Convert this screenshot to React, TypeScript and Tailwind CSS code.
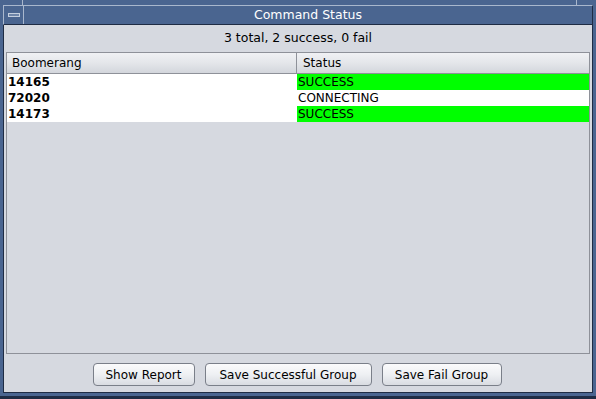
const rows = [
  { id: "14165", status: "SUCCESS", ok: true },
  { id: "72020", status: "CONNECTING", ok: false },
  { id: "14173", status: "SUCCESS", ok: true },
];

function Button(props: { label: string; className?: string }) {
  return (
    <button
      className={
        "h-[23px] rounded-[4px] border border-[#7a7f89] bg-gradient-to-b from-[#fbfbfc] via-[#eef0f3] to-[#d9dce2] text-[12px] leading-none text-black " +
        (props.className ?? "")
      }
    >
      {props.label}
    </button>
  );
}

export default function App() {
  return (
    <div
      className="flex h-[399px] w-[596px] flex-col bg-[#4a6590] text-black"
      style={{ fontFamily: '"DejaVu Sans", Verdana, sans-serif' }}
    >
      {/* top frame edge */}
      <div className="flex h-[5px]">
        <div className="w-[23px] border-r border-[#a9b7cd]" />
        <div className="flex-1" />
        <div className="w-[20px] border-l border-[#a9b7cd]" />
      </div>
      {/* title bar */}
      <div className="mx-[3px] flex h-[20px] border-t border-l border-r border-b border-t-[#a9b7cd] border-l-[#a9b7cd] border-r-[#1f2c44] border-b-[#1f2c44]">
        <div className="flex w-[20px] items-center justify-center border-r border-[#a9b7cd]">
          <div className="mb-[1px] h-[4px] w-[12px] border border-[#c3cede] bg-[#6d84a8]" />
        </div>
        <div className="flex flex-1 items-center justify-center text-[12.5px] text-white">
          Command Status
        </div>
      </div>
      {/* content */}
      <div className="mx-[3px] flex flex-1 flex-col border-l border-r border-[#1f2c44] bg-[#d6d9e0]">
        <div className="flex h-[27px] items-center justify-center text-[12.5px]">
          3 total, 2 success, 0 fail
        </div>
        <div className="mx-[2px] flex h-[302px] flex-col border border-[#8e9199]">
          <div className="flex h-[21px] border-b border-[#8e9199] bg-gradient-to-b from-[#f0f1f4] via-[#e4e6ea] to-[#d3d6dc] text-[12px]">
            <div className="flex w-[290px] items-center border-r border-[#8e9199] pl-[5px]">
              Boomerang
            </div>
            <div className="flex flex-1 items-center pl-[6px]">Status</div>
          </div>
          <div className="flex flex-col text-[12px]">
            {rows.map((r) => (
              <div key={r.id} className="flex h-[16px] items-center">
                <div className="flex h-full w-[290px] items-center bg-white pl-[1px] font-bold">
                  {r.id}
                </div>
                <div
                  className={
                    "flex h-full flex-1 items-center pl-[1px] " +
                    (r.ok ? "bg-[#00ff00]" : "bg-white")
                  }
                >
                  {r.status}
                </div>
              </div>
            ))}
          </div>
        </div>
        <div className="flex flex-1 items-center justify-center gap-[10px] pr-[2px] pt-[3px]">
          <Button label="Show Report" className="w-[102px]" />
          <Button label="Save Successful Group" className="w-[167px]" />
          <Button label="Save Fail Group" className="w-[120px]" />
        </div>
      </div>
      {/* bottom frame */}
      <div className="flex h-[7px] flex-col">
        <div className="mx-[3px] h-[4px] border-t border-[#1f2c44]" />
        <div className="h-[3px] bg-[#1f2c44]" />
      </div>
    </div>
  );
}
